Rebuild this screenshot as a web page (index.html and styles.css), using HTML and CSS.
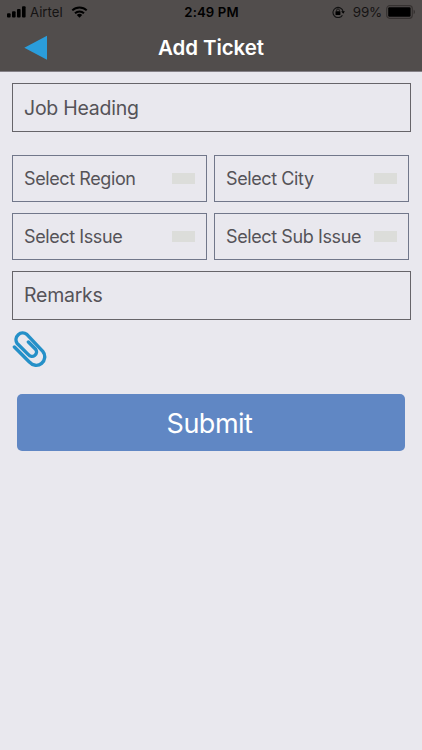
FILE: index.html
```html
<!DOCTYPE html>
<html lang="en">
<head>
  <meta charset="UTF-8">
  <meta name="viewport" content="width=device-width, initial-scale=1">
  <title>Add Ticket</title>
  <link rel="stylesheet" href="styles.css">
</head>
<body>
  <header class="header">
    <div class="status-bar">
      <div class="status-left">
        <svg class="signal" width="19" height="12" viewBox="0 0 19 12">
          <rect x="0" y="7.2" width="3.6" height="4.3" rx="1"/>
          <rect x="5" y="5.3" width="3.6" height="6.2" rx="1"/>
          <rect x="10" y="3" width="3.6" height="8.5" rx="1"/>
          <rect x="15" y="0.3" width="3.6" height="11.2" rx="1"/>
        </svg>
        <span class="carrier">Airtel</span>
        <svg class="wifi" width="17" height="12" viewBox="0 0 17 12">
          <path d="M1.3 4.4a10.3 10.3 0 0 1 14.4 0M4 7.2a6.5 6.5 0 0 1 9 0" fill="none" stroke="#000" stroke-width="2"/>
          <path d="M8.5 11.8L5.8 9.1a3.9 3.9 0 0 1 5.4 0z"/>
        </svg>
      </div>
      <span class="time">2:49 PM</span>
      <div class="status-right">
        <svg class="lock" width="13" height="12" viewBox="0 0 13 12">
          <path d="M10.4 9.2A5.1 5.1 0 1 1 11.1 5.5" fill="none" stroke="#111" stroke-width="1.1"/>
          <path d="M9.2 5.2h3.7L11.2 7.7z"/>
          <rect x="3.5" y="5.2" width="4.9" height="3.7" rx=".4"/>
          <path d="M4.6 5.5V4.3a1.4 1.4 0 0 1 2.8 0v1.2" fill="none" stroke="#111" stroke-width=".9"/>
        </svg>
        <span class="percent">99%</span>
        <svg class="battery" width="30" height="14" viewBox="0 0 30 14">
          <rect x=".7" y=".7" width="25.6" height="12.6" rx="3" fill="none" stroke="#363231" stroke-width="1.2"/>
          <rect x="2.2" y="2.3" width="22.4" height="9.4" rx="1.2"/>
          <path d="M27.6 4.8c1.9.7 1.9 3.7 0 4.4z" fill="#363231"/>
        </svg>
      </div>
    </div>
    <div class="nav-bar">
      <a class="back" href="#" aria-label="Back">
        <svg width="24" height="26" viewBox="0 0 24 26">
          <path d="M0.3 12.8L23 0.8v24z" fill="#2a9ddb"/>
        </svg>
      </a>
      <h1 class="title">Add Ticket</h1>
    </div>
  </header>

  <main class="ticket-form">
    <div class="field heading"><span>Job Heading</span></div>

    <div class="selects">
      <div class="select"><span>Select Region</span><i class="arrow"></i></div>
      <div class="select"><span>Select City</span><i class="arrow"></i></div>
      <div class="select"><span>Select Issue</span><i class="arrow"></i></div>
      <div class="select"><span>Select Sub Issue</span><i class="arrow"></i></div>
    </div>

    <div class="field remarks"><span>Remarks</span></div>

    <a class="attach" href="#" aria-label="Attach file">
      <svg width="36" height="38" viewBox="12 330 36 38">
        <path d="M14.4 347L29.6 362.2A8.4 8.4 0 0 0 42.8 351.4L26.8 334.4A6.7 6.7 0 0 0 17 343.2L28.4 354.6A4.5 4.5 0 0 0 35.6 349.2L28.4 342" fill="none" stroke="#2590c8" stroke-width="3.4" stroke-linecap="round" stroke-linejoin="round"/>
      </svg>
    </a>

    <button type="button" class="submit">Submit</button>
  </main>
</body>
</html>
```

FILE: styles.css
```css
* { box-sizing: border-box; }
body { margin: 0; min-height: 750px; background: #e9e8ee; color: #555358; font-family: Inter, "Liberation Sans", sans-serif; }

.header { height: 72px; background: #514d4c; border-bottom: 1px solid #858187; }
.status-bar { display: grid; grid-template-columns: 1fr auto 1fr; align-items: center; height: 24px; padding: 0 6px 0 7px; font-size: 13px; color: #000; }
.status-left, .status-right { display: flex; align-items: center; }
.status-right { justify-content: flex-end; color: #151313; }
.carrier { margin: 0 8px 0 4px; color: #151313; font-size: 13.2px; }
.time { font-weight: 600; font-size: 13.2px; letter-spacing: 0.1px; }
.percent { margin: 0 4px 0 8px; font-size: 13.4px; letter-spacing: -0.2px; }

.nav-bar { display: grid; grid-template-columns: 1fr auto 1fr; align-items: center; height: 47px; }
.back { display: flex; padding-left: 24px; }
.title { margin: 0; color: #fff; font-size: 20.5px; font-weight: 600; letter-spacing: -0.1px; }

.ticket-form { display: flex; flex-direction: column; padding: 11px 11px 0 12px; }
.field { display: flex; align-items: center; height: 49px; padding-left: 11px; border: 1px solid #666469; font-size: 19.5px; letter-spacing: -0.25px; }
.heading { margin-bottom: 23px; }
.remarks { margin-top: 11px; padding-bottom: 2px; }
.selects { display: grid; grid-template-columns: 195px 195px; gap: 11px 7px; }
.select { display: flex; align-items: center; justify-content: space-between; height: 47px; padding: 0 11px; border: 1px solid #71778a; font-size: 18px; letter-spacing: -0.4px; white-space: nowrap; }
.arrow { width: 23px; height: 11px; background: #dcddda; }

.attach { display: flex; width: 36px; margin-top: 10px; }
.submit { height: 57px; margin: 26px 6px 0 5px; padding: 2px 3px 0 0; border: none; border-radius: 5px; background: #6087c4; color: #fff; font-family: inherit; font-size: 27px; letter-spacing: -0.5px; cursor: pointer; }
```
